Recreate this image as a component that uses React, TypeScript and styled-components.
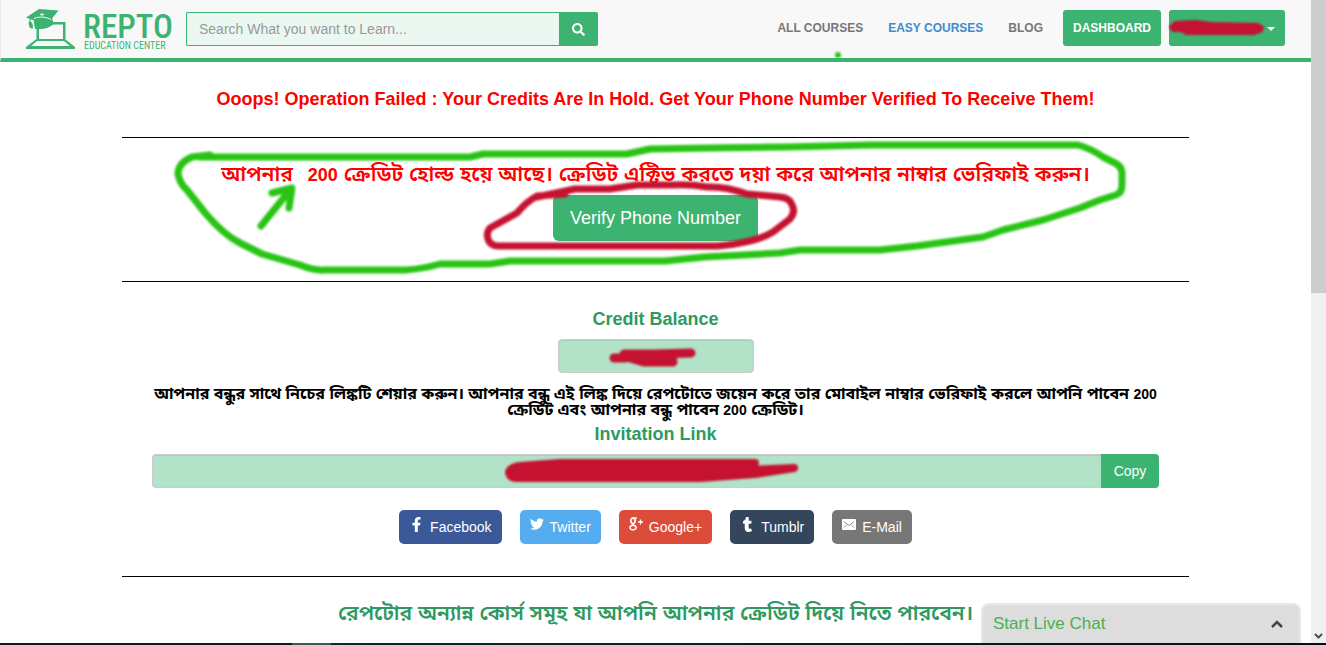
import React from "react";
import styled, { createGlobalStyle } from "styled-components";
import { FaSearch, FaFacebookF, FaTwitter, FaTumblr } from "react-icons/fa";

const green = "#3cb371";
const scribbleRed = "#c41230";
const markerGreen = "#28c414";

const GlobalStyle = createGlobalStyle`
  * { box-sizing: border-box; }
  body {
    margin: 0;
    background: #fff;
    color: #333;
    font-family: "Liberation Sans", Arial, "Noto Sans Bengali", "Noto Sans", sans-serif;
    font-size: 14px;
  }
  button, input { font-family: inherit; }
`;

const Shell = styled.div`
  display: grid;
  grid-template-columns: minmax(0, 1fr) 15px;
  grid-template-rows: minmax(0, 1fr) 2px;
  height: 100vh;
`;

const Viewport = styled.div`
  position: relative;
  overflow: hidden;
`;

const ScrollTrack = styled.div`
  display: flex;
  flex-direction: column;
  justify-content: space-between;
  align-items: center;
  background: #f0f0f0;
`;

const ScrollThumb = styled.div`
  width: 100%;
  height: 45.6%;
  background: #cdcdcd;
`;

const Taskbar = styled.div`
  grid-column: 1 / -1;
  background: linear-gradient(90deg, #14181c 0 22%, #3a5a50 22% 25%, #0a2a2c 25%, #06101c);
`;

const Header = styled.header`
  display: flex;
  align-items: center;
  height: 62px;
  padding: 0 26px 0 25px;
  background: #f8f8f8;
  border-bottom: 4px solid ${green};
  border-left: 1px solid #e7e7e7;
`;

const Brand = styled.a`
  display: flex;
  width: 160px;
  height: 44px;
`;

const Search = styled.form`
  display: flex;
  height: 34px;
  flex: 0 1 412px;
`;

const SearchInput = styled.input`
  flex: 1;
  min-width: 0;
  padding: 0 12px;
  border: 1px solid ${green};
  border-right: 0;
  border-radius: 2px 0 0 2px;
  background: #ebf7f1;
  font-size: 14px;
  outline: 0;
  &::placeholder { color: #999; opacity: 1; }
`;

const SearchButton = styled.button`
  display: flex;
  align-items: center;
  justify-content: center;
  width: 39px;
  padding: 0;
  border: 0;
  border-radius: 0 2px 2px 0;
  background: ${green};
  color: #fff;
  font-size: 13px;
`;

const Nav = styled.nav`
  display: flex;
  align-items: center;
  margin-left: auto;
  padding-bottom: 2px;
`;

const NavLink = styled.a<{ $active?: boolean }>`
  margin-right: 25px;
  color: ${(p) => (p.$active ? "#428bca" : "#777")};
  font-size: 12px;
  font-weight: bold;
  text-decoration: none;
  white-space: nowrap;
  &:last-of-type { margin-right: 20px; }
`;

const NavButton = styled.button`
  position: relative;
  height: 36px;
  padding: 0 10px;
  border: 0;
  border-radius: 3px;
  background: ${green};
  color: #fff;
  font-size: 12px;
  font-weight: bold;
`;

const UserButton = styled(NavButton)`
  width: 116px;
  margin-left: 8px;
  text-align: right;
`;

const Caret = styled.span`
  display: inline-block;
  border: 4px solid transparent;
  border-top-color: #fff;
  border-bottom: 0;
  vertical-align: middle;
`;

const Container = styled.main`
  max-width: 1067px;
  margin: 0 auto;
  text-align: center;
`;

const Section = styled.section`
  position: relative;
  padding: 0 30px;
  border-bottom: 1px solid #000;
`;

const AlertSection = styled(Section)`
  padding: 26px 0 27px;
`;

const HoldSection = styled(Section)`
  padding: 25px 0 40px;
`;

const CreditSection = styled(Section)`
  padding-top: 26px;
  padding-bottom: 32px;
`;

const Title = styled.h4<{ $alert?: boolean }>`
  display: block;
  margin: 0;
  color: ${(p) => (p.$alert ? "#f00" : "#2e9960")};
  font-size: 18px;
  line-height: 22px;
  font-weight: bold;
`;

const BanglaTitle = styled(Title)`
  font-size: 21px;
  font-weight: 600;
  white-space: pre-wrap;
`;

const Digits = styled.span<{ $large?: boolean }>`
  font-size: ${(p) => (p.$large ? "18px" : "14px")};
  font-weight: bold;
`;

const VerifyButton = styled.button`
  height: 46px;
  margin-top: 9px;
  padding: 0 17px;
  border: 0;
  border-radius: 6px;
  background: ${green};
  color: #fff;
  font-size: 18px;
`;

const Field = styled.div`
  position: relative;
  display: flex;
  height: 34px;
`;

const CreditField = styled(Field)`
  width: 196px;
  margin: 9px auto 13px;
`;

const LinkField = styled(Field)`
  margin-top: 9px;
`;

const ReadOnlyInput = styled.input<{ $joined?: boolean }>`
  flex: 1;
  min-width: 0;
  border: 1px solid #ccc;
  border-right-width: ${(p) => (p.$joined ? "0" : "1px")};
  border-radius: ${(p) => (p.$joined ? "4px 0 0 4px" : "4px")};
  background: #b2e2c8;
  box-shadow: inset 0 1px 1px rgba(0, 0, 0, 0.075);
`;

const CopyButton = styled.button`
  width: 58px;
  padding: 0;
  border: 0;
  border-radius: 0 4px 4px 0;
  background: ${green};
  color: #fff;
  font-size: 14px;
`;

const Note = styled.p`
  margin: 0 0 5px;
  color: #000;
  font-size: 16px;
  line-height: 16px;
  font-weight: bold;
`;

const ShareRow = styled.div`
  display: flex;
  justify-content: center;
  gap: 18px;
  margin-top: 22px;
`;

const ShareLink = styled.a<{ $color: string }>`
  display: flex;
  align-items: center;
  gap: 6px;
  height: 34px;
  padding: 0 10px;
  border-radius: 5px;
  background: ${(p) => p.$color};
  color: #fff;
  font-size: 14px;
  text-decoration: none;
  svg { margin-bottom: 6px; }
`;

const Courses = styled.section`
  padding-top: 25px;
`;

const Chat = styled.button`
  position: absolute;
  right: 10px;
  bottom: 0;
  display: flex;
  align-items: center;
  justify-content: space-between;
  width: 320px;
  height: 40px;
  padding: 0 16px 0 10px;
  border: 2px solid #e8e8e8;
  border-bottom: 0;
  border-radius: 8px 8px 0 0;
  background: #ddd;
  color: #4caf50;
  font-size: 17px;
`;

const Scribble = styled.svg`
  position: absolute;
  left: 0;
  top: 0;
  overflow: visible;
  pointer-events: none;
  filter: blur(1px);
  z-index: 1;
`;

const Logo = () => (
  <svg width="150" height="44" viewBox="26 6 150 44" role="img" aria-label="Repto Education Center">
    <g fill={green}>
      <path d="M26 16.500 39 8 58.500 9.500 52 17.500 54 23C50 26 46 28 40 28H35L33.500 19 31 18.500 30 20C33 22 33.500 25 32.500 28L29.500 26.500 28.500 22 30 18Z" />
      <path fillRule="evenodd" d="M53 21H65.500V38.500L75 46V48H26V46L36.500 38V27H39V38H63V23.500H53ZM37 40 31 45H70L64 40Z" />
    </g>
    <path d="M34 17.500C40 15 46 16 51 18.500" fill="none" stroke="#f8f8f8" />
    <ellipse cx="42" cy="13.500" rx="2" ry="1" fill="#f8f8f8" />
    <text x="83" y="37" fill={green} fontFamily="Roboto Condensed, Roboto, sans-serif" fontSize="33" fontWeight="500">REPTO</text>
    <text x="84" y="48" fill={green} fontFamily="Roboto Condensed, Roboto, sans-serif" fontSize="10">EDUCATION CENTER</text>
  </svg>
);

const MailIcon = () => (
  <svg width="14" height="11" viewBox="0 0 14 11" aria-hidden="true">
    <rect width="14" height="11" rx="1" fill="#fff" />
    <path d="M2 2.500 7 6.500 12 2.500M2 8.500 5 5.500M12 8.500 9 5.500" fill="none" stroke="#777" strokeWidth="0.800" />
  </svg>
);

const GooglePlusIcon = () => (
  <svg width="14" height="14" viewBox="0 0 14 14" aria-hidden="true">
    <g fill="none" stroke="#fff">
      <ellipse cx="4" cy="3.800" rx="2.200" ry="2.700" strokeWidth="1.700" />
      <path d="M4 1H8M5 6.500Q3 7.300 4.500 8.300" strokeWidth="1.300" />
      <ellipse cx="4" cy="10.600" rx="3" ry="2.300" strokeWidth="1.500" />
      <path d="M9 5H14M11.500 2.500V7.500" strokeWidth="1.300" />
    </g>
  </svg>
);

const shares = [
  { name: "Facebook", color: "#3b5998", icon: <FaFacebookF size={15} /> },
  { name: "Twitter", color: "#55acee", icon: <FaTwitter size={14} /> },
  { name: "Google+", color: "#dd4b39", icon: <GooglePlusIcon /> },
  { name: "Tumblr", color: "#35465c", icon: <FaTumblr size={15} /> },
  { name: "E-Mail", color: "#777", icon: <MailIcon /> },
];

export default function App() {
  return (
    <>
      <GlobalStyle />
      <Shell>
        <Viewport>
          <Header>
            <Brand href="#"><Logo /></Brand>
            <Search>
              <SearchInput aria-label="Search courses" placeholder="Search What you want to Learn..." />
              <SearchButton type="button" aria-label="Search"><FaSearch /></SearchButton>
            </Search>
            <Nav>
              <NavLink href="#">ALL COURSES</NavLink>
              <NavLink href="#" $active>EASY COURSES</NavLink>
              <NavLink href="#">BLOG</NavLink>
              <NavButton type="button">DASHBOARD</NavButton>
              <UserButton type="button" aria-label="Account menu">
                <Caret />
                <Scribble width="116" height="36" viewBox="1169 10 116 36">
                  <path d="M1175 22 1196 21 1212 23 1258 24 1263 27 1262 31 1254 34 1186 34 1181 31 1173 31 1170 27Z" fill={scribbleRed} stroke={scribbleRed} strokeWidth="2" strokeLinejoin="round" />
                  <circle cx="838" cy="55" r="3" fill={markerGreen} />
                </Scribble>
              </UserButton>
            </Nav>
          </Header>
          <Container>
            <AlertSection>
              <Title $alert>Ooops! Operation Failed : Your Credits Are In Hold. Get Your Phone Number Verified To Receive Them!</Title>
            </AlertSection>
            <HoldSection>
              <BanglaTitle $alert>
                {"আপনার"}<Digits $large>{"   200"}</Digits>{" ক্রেডিট হোল্ড হয়ে আছে। ক্রেডিট এক্টিভ করতে দয়া করে আপনার নাম্বার ভেরিফাই করুন।"}
              </BanglaTitle>
              <VerifyButton type="button">Verify Phone Number</VerifyButton>
              <Scribble width="1067" height="143" viewBox="122 138 1067 143">
                <g fill="none" strokeWidth="7" strokeLinecap="round" strokeLinejoin="round">
                  <path stroke={markerGreen} d="M210 155 192 157Q178 163 178 174Q180 184 187 190L206 214Q224 235 240 243L262 254 300 265Q315 271 325 270H405Q422 269 440 264H490L510 261H665L705 257 780 253 800 250H880L917 246 983 237 1003 230 1043 220 1080 208 1100 200 1116 195Q1122 193 1122 185V172Q1121 166 1115 163L1103 157Q1092 149 1078 145H870L787 147 710 148 650 149 627 154H483L470 157H200" />
                  <path stroke={markerGreen} d="M261 226 290 190M272 193 292 188 289 208" />
                  <path stroke={scribbleRed} d="M565 194 537 196Q526 202 517 213L490 228Q486 233 488 239Q490 246 499 246H717Q755 243 773 232L790 219Q796 211 792 205Q790 198 780 197L747 194Q725 186 707 187Q690 184 673 185H637L610 189H575L537 197" />
                </g>
              </Scribble>
            </HoldSection>
            <CreditSection>
              <Title as="label" htmlFor="credit">Credit Balance</Title>
              <CreditField>
                <ReadOnlyInput id="credit" readOnly />
                <Scribble width="196" height="34" viewBox="558 339 196 34">
                  <path d="M614 358H625L624 354H655L691 353M630 358 644 362H673L672 357" fill="none" stroke={scribbleRed} strokeWidth="9" strokeLinecap="round" strokeLinejoin="round" />
                </Scribble>
              </CreditField>
              <Note>
                আপনার বন্ধুর সাথে নিচের লিঙ্কটি শেয়ার করুন। আপনার বন্ধু এই লিঙ্ক দিয়ে রেপটোতে জয়েন করে তার মোবাইল নাম্বার ভেরিফাই করলে আপনি পাবেন <Digits>200</Digits> ক্রেডিট এবং আপনার বন্ধু পাবেন <Digits>200</Digits> ক্রেডিট।
              </Note>
              <Title as="label" htmlFor="invite">Invitation Link</Title>
              <LinkField>
                <ReadOnlyInput id="invite" readOnly $joined />
                <CopyButton type="button">Copy</CopyButton>
                <Scribble width="1006" height="34" viewBox="152 454 1006 34">
                  <path d="M509 472Q511 467 520 466L560 463H755L750 470 794 468 755 474 700 478H517Q510 478 509 472Z" fill={scribbleRed} stroke={scribbleRed} strokeWidth="8" strokeLinejoin="round" />
                </Scribble>
              </LinkField>
              <ShareRow>
                {shares.map((s) => (
                  <ShareLink key={s.name} href="#" $color={s.color}>{s.icon}{s.name}</ShareLink>
                ))}
              </ShareRow>
            </CreditSection>
            <Courses>
              <BanglaTitle>রেপটোর অন্যান্ন কোর্স সমূহ যা আপনি আপনার ক্রেডিট দিয়ে নিতে পারবেন।</BanglaTitle>
            </Courses>
          </Container>
          <Chat type="button">
            Start Live Chat
            <svg width="12" height="8" viewBox="0 0 12 8" aria-hidden="true"><path d="M1 7 6 2 11 7" fill="none" stroke="#444" strokeWidth="2.500" /></svg>
          </Chat>
        </Viewport>
        <ScrollTrack>
          <ScrollThumb />
          <svg width="9" height="12" viewBox="0 0 9 12" aria-hidden="true"><path d="M1 3 4.500 6.500 8 3" fill="none" stroke="#505050" strokeWidth="2" /></svg>
        </ScrollTrack>
        <Taskbar />
      </Shell>
    </>
  );
}
